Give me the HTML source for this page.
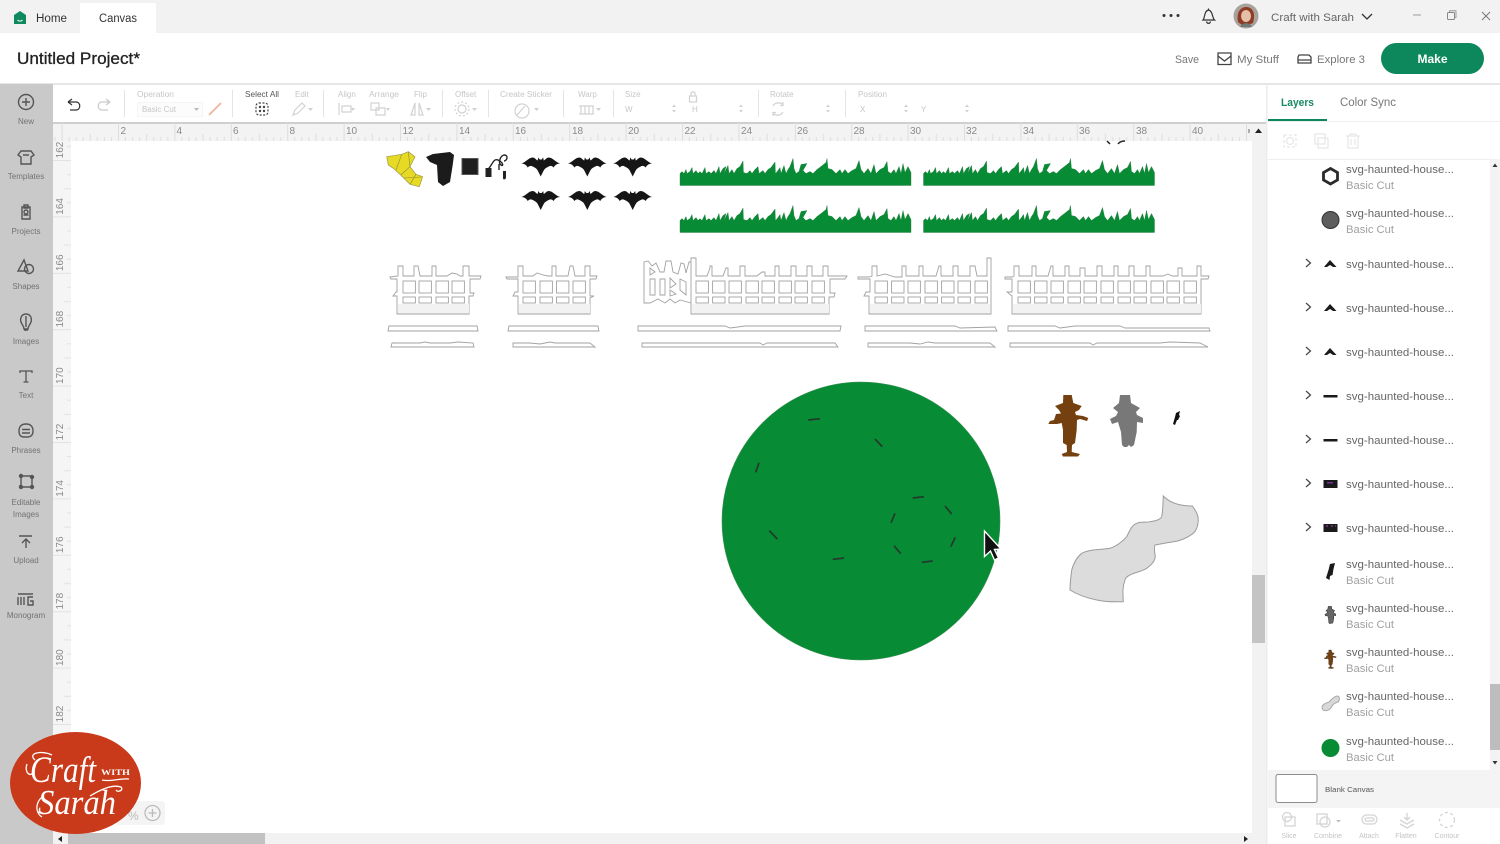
<!DOCTYPE html>
<html lang="en"><head><meta charset="utf-8"><title>Untitled Project</title>
<style>
html,body{margin:0;padding:0;width:1500px;height:844px;overflow:hidden;background:#fff}
svg{display:block;font-family:"Liberation Sans",sans-serif}
.d{fill:#c6c6c6;font-size:8px}
.s{fill:#727272;font-size:8px;text-anchor:middle}
.i{fill:none;stroke:#555;stroke-width:1.4}
.f{fill:#fff;stroke:#a2a2a2;stroke-width:.9}
.c{stroke:#d2d2d2;stroke-width:1.2;fill:none}
.r{fill:#8a8a8a;font-size:10px}
.n{fill:#666;font-size:11px}
.b{fill:#a0a0a0;font-size:11px}
.u{fill:#c4c4c4;font-size:7px;text-anchor:middle}
</style></head><body>
<svg width="1500" height="844" viewBox="0 0 1500 844" xmlns="http://www.w3.org/2000/svg">
<defs>
<pattern id="hr" x="118" y="123" width="56.4" height="18" patternUnits="userSpaceOnUse">
<path d="M.5 0V18M7.5 14V18M14.6 14V18M21.6 14V18M28.7 11V18M35.7 14V18M42.8 14V18M49.8 14V18" stroke="#dedede" stroke-width="1" fill="none"/></pattern>
<pattern id="vr" x="53" y="160" width="18" height="56.4" patternUnits="userSpaceOnUse">
<path d="M0 .5H18M14 14.6H18M11 28.7H18M14 42.8H18" stroke="#e2e2e2" stroke-width="1" fill="none"/></pattern>
<path id="gr" fill="#078b34" stroke="#2d7f45" stroke-width=".4" d="M0 27V15L2 13L4 15L6 11L7 15L10 13L12 9L13 15L16 12L18 15L20 13L22 15L25 9L26 15L29 13L31 15L34 12L36 15L39 8L40 15L43 10L46 8L44 15L48 7L49 15L52 11L54 15L57 10L60 8L63 2.5L63.5 14L67 15L70 12L72 15L75 11L78 8L79 15L83 12L85 15L88 11L91 9L95 3.5L95.500 15L98 12L100 9L101 15L104 7L106 15L108 11L110 8L113 0L114 10L116 15L119 13L121 6L127 5L123 12L126 15L130 13L133 15L137 11L141 8L146 4L147 0L148 10L152 11L156 15L160 11L162 15L165 11L168 15L172 12L176 10L179 2L181 11L184 15L188 10L191 15L194 6L196 15L200 11L204 9L207 3L208 13L211 15L214 11L216 15L219 8L221 15L223 5L225 14L228 8L231 14V27Z"/>
<path id="bat" fill="#161616" d="M-19.5 7C-15 6-12 1-8 1C-6 1-5 3-3 4L-2.5 1L-1 3H1L2.5 1L3 4C5 3 6 1 8 1C12 1 15 6 19.5 7C16 7 14 9 13 11C11 9 10 9 8 10C6 11 4 12 3 14L0 20L-3 14C-4 12-6 11-8 10C-10 9-11 9-13 11C-14 9-16 7-19.5 7Z"/>
<g id="w" class="f"><rect width="12.4" height="12"/><rect y="16" width="12.4" height="6"/></g>
<path id="sc" d="M1063.300 395H1071.700L1073.300 403L1081.700 406L1079 410L1075 412L1076 415L1083 416L1088.300 418L1087 421L1080 419L1077 420L1076.700 430L1075 443L1072 445L1071.700 452L1080 454L1078 456.500H1063L1061.700 454L1067 452L1066.700 445L1063 443L1063 430L1061.700 423L1057 424L1048.300 424L1050 421L1054 420L1056 414L1061 413.500L1059 410L1055 406L1063 403Z"/>
<path id="sg" d="M1120 395H1130L1131 403L1140 408L1136 412L1137 415L1143 418L1143 423L1137 422L1136.700 432L1134 445L1131 447L1129 445L1127 447L1124 447L1122 445L1121 432L1118 422L1112 424L1110 419L1116 416L1118 412L1113 408L1119 403Z"/>
<path id="cl" fill="#dcdcdc" stroke="#9c9c9c" stroke-width="1" d="M1163.300 496C1170 503 1180 506 1192.300 506C1196 511 1198.300 515 1198.300 520C1198 527 1196 531 1193.300 533.300C1187 538 1180 541 1173.300 541.700C1166 543 1160 544 1155 545C1153 550 1156 554 1155 558.300C1154 563 1150 566 1146.700 568.300C1141 572 1135 572 1130 575C1126 577 1125 579 1125 580C1122 588 1123 595 1123.300 601.700C1114 602 1105 602 1096.700 600C1087 598 1078 595 1070 590C1070 583 1071 576 1071.700 570C1074 562 1077 557 1081.700 553.300C1090 549 1100 550 1110 548.300C1117 546 1122 542 1126.700 536.700C1130 530 1132 525 1136.700 523.300C1142 521 1146 523 1150 521.700C1155 521 1160 520 1161.700 516.700C1163 510 1163 503 1163.300 496Z"/>
<path id="bd" fill="#111" d="M1175 425L1173 424L1175 417L1176 413L1180 411L1179 415L1180 416L1178 420L1177 420Z"/>
</defs>

<rect width="1500" height="844" fill="#fff"/>
<rect width="1500" height="33" fill="#f2f2f2"/>
<rect x="80" y="3" width="76" height="30" fill="#fff"/>
<path d="M14 15L20 11L26 15V24H14Z" fill="#0f8a5f"/><path d="M17.500 20C19 21.500 21 21.500 22.500 20" stroke="#fff" stroke-width="1" fill="none"/>
<text x="36" y="22" font-size="11.500" fill="#333" textLength="31" lengthAdjust="spacingAndGlyphs">Home</text>
<text x="99" y="22" font-size="11.500" fill="#333" textLength="38" lengthAdjust="spacingAndGlyphs">Canvas</text>
<circle cx="1164" cy="15.500" r="1.500" fill="#333"/><circle cx="1171" cy="15.500" r="1.500" fill="#333"/><circle cx="1178" cy="15.500" r="1.500" fill="#333"/>
<path d="M1203 20C1205 18 1204 11 1208.500 10C1213 11 1212 18 1214.500 20ZM1206.500 21.500C1207 24 1210 24 1210.500 21.500M1208.500 8.500V10" fill="none" stroke="#333" stroke-width="1.200"/>
<circle cx="1246" cy="16" r="12.500" fill="#a9a29c"/><path d="M1238 22C1236 12 1241 7 1246 7C1252 7 1256 12 1253 23L1248 25H1242Z" fill="#8e3c24"/><ellipse cx="1246" cy="16" rx="5" ry="6" fill="#e5bfa8"/><path d="M1240 27C1242 22 1250 22 1252 27Z" fill="#6d7a78"/>
<text x="1271" y="21" font-size="11" fill="#666" textLength="83" lengthAdjust="spacingAndGlyphs">Craft with Sarah</text>
<path d="M1362 14L1367 19L1372 14" fill="none" stroke="#333" stroke-width="1.300"/>
<path d="M1413 15H1421" stroke="#999" stroke-width="1"/>
<rect x="1447.500" y="12.500" width="7" height="7" rx="1" fill="none" stroke="#888"/><path d="M1449.500 12V10.800H1456V17.500H1455" fill="none" stroke="#888" stroke-width=".8"/>
<path d="M1482 12L1490 20M1490 12L1482 20" stroke="#777" stroke-width="1"/>

<text x="17" y="64" font-size="16.500" fill="#222" textLength="123" lengthAdjust="spacingAndGlyphs" stroke="#222" stroke-width=".3">Untitled Project*</text>
<text x="1175" y="63" font-size="11" fill="#777" textLength="24" lengthAdjust="spacingAndGlyphs">Save</text>
<path d="M1218 53H1231V64.500H1218ZM1218 56L1224.500 61L1231 56" fill="none" stroke="#444" stroke-width="1.300"/>
<text x="1237" y="63" font-size="11" fill="#777" textLength="42" lengthAdjust="spacingAndGlyphs">My Stuff</text>
<path d="M1299 55H1309L1311 57V63H1298V57ZM1298 60H1311" fill="none" stroke="#444" stroke-width="1.300"/>
<text x="1317" y="63" font-size="11" fill="#777" textLength="48" lengthAdjust="spacingAndGlyphs">Explore 3</text>
<rect x="1381" y="43" width="103" height="31" rx="15.500" fill="#0d875c"/>
<text x="1432.500" y="63" font-size="12" font-weight="bold" fill="#fff" text-anchor="middle">Make</text>
<rect y="83" width="1500" height="2" fill="#e6e6e6"/>

<rect y="84" width="53" height="760" fill="#c9c9c9"/>
<g class="i">
<circle cx="26" cy="102" r="7.500"/><path d="M26 98V106M22 102H30"/>
<path d="M21 151H31L34 155L31 157V164H21V157L18 155ZM23 155H29"/>
<path d="M22 207H30V219H22ZM24 205H28V208H24ZM23.500 215H28.500"/><circle cx="26" cy="212" r="2"/>
<path d="M24 260L18 271H28Z"/><circle cx="29" cy="269" r="4.500"/>
<path d="M26 314C21 314 20 319 21 322C22 325 24 326 24 329H28C28 326 30 325 31 322C32 319 31 314 26 314ZM24 330H28M26 316V327"/>
<path d="M20 373V371H32V373M26 371V382M23.500 382H28.500" stroke-width="1.300"/>
<path d="M26 424C31 424 33 427 33 431C33 435 31 437 27 437H24C20 437 19 434 19 431C19 427 21 424 26 424ZM22 429.500H30M22 433H30"/>
<path d="M21 476V487H32V477M21 476H32M19 486H22"/><circle cx="21" cy="476" r="1.500" fill="#555"/><circle cx="32" cy="477" r="1.500" fill="#555"/><circle cx="21" cy="487" r="1.500" fill="#555"/><circle cx="32" cy="487" r="1.500" fill="#555"/>
<path d="M19 536H32M26 548V539M22 543L26 539L30 543"/>
<path d="M18 594H33M18 597V605M21 597V605M24 597V605M33 597H28V605H33V601H30"/>
</g>
<g class="s">
<text x="26" y="124">New</text><text x="26" y="179">Templates</text><text x="26" y="234">Projects</text><text x="26" y="289">Shapes</text><text x="26" y="344">Images</text><text x="26" y="398">Text</text><text x="26" y="453">Phrases</text><text x="26" y="505">Editable</text><text x="26" y="517">Images</text><text x="26" y="563">Upload</text><text x="26" y="618">Monogram</text>
</g>

<rect x="53" y="85" width="1213" height="37" fill="#fff"/>
<path d="M68 102L72 99M68 102L72 105M68 102H76C81 102 81 110 76 110H70" fill="none" stroke="#333" stroke-width="1.200"/>
<path d="M110 102L106 99M110 102L106 105M110 102H102C97 102 97 110 102 110H108" fill="none" stroke="#c9c9c9" stroke-width="1.200"/>
<g stroke="#e4e4e4" stroke-width="1"><path d="M124.500 90V117M232.500 90V117M323.500 90V117M442.500 90V117M488.500 90V117M563.500 90V117M613.500 90V117M758.500 90V117M845.500 90V117"/></g>
<rect x="137.500" y="102.500" width="65" height="14" fill="#fcfcfc" stroke="#f5f5f5"/>
<g class="d">
<text x="137" y="97" textLength="37" lengthAdjust="spacingAndGlyphs">Operation</text>
<text x="142" y="112" textLength="34" lengthAdjust="spacingAndGlyphs">Basic Cut</text>
<text x="295" y="97">Edit</text><text x="338" y="97">Align</text><text x="369" y="97" textLength="30" lengthAdjust="spacingAndGlyphs">Arrange</text><text x="414" y="97">Flip</text><text x="455" y="97">Offset</text>
<text x="500" y="97" textLength="52" lengthAdjust="spacingAndGlyphs">Create Sticker</text><text x="578" y="97">Warp</text><text x="625" y="97">Size</text><text x="625" y="112">W</text><text x="692" y="112">H</text><text x="770" y="97">Rotate</text><text x="858" y="97" textLength="29" lengthAdjust="spacingAndGlyphs">Position</text><text x="860" y="112">X</text><text x="921" y="112">Y</text>
</g>
<text x="245" y="97" font-size="8" fill="#555" textLength="34" lengthAdjust="spacingAndGlyphs">Select All</text>
<path d="M194 108H199L196.500 111Z" fill="#bbb"/>
<path d="M209 115L221 103" stroke="#eeb39b" stroke-width="1.700"/>
<rect x="256" y="103" width="12" height="12" rx="3" fill="none" stroke="#444" stroke-width="1.200" stroke-dasharray="2 1.500"/>
<circle cx="260" cy="107" r="1.200" fill="#444"/><circle cx="264" cy="107" r="1.200" fill="#444"/><circle cx="260" cy="111" r="1.200" fill="#444"/><circle cx="264" cy="111" r="1.200" fill="#444"/>
<g class="c">
<path d="M293 115L295 110L302 103L305 106L298 113Z"/><path d="M339 103V115M342 106H351V112H342ZM371 103H379V110H371ZM376 108H385V115H376ZM411 115L415 103V115ZM423 115L419 103V115Z"/>
<circle cx="462" cy="109" r="4"/><circle cx="462" cy="109" r="7" stroke-dasharray="2 2"/>
<circle cx="522" cy="111" r="7"/><path d="M517 115L525 106"/>
<path d="M579 106H594M579 114H594M581 106V114M585 106V114M589 106V114M593 106V114"/>
<rect x="689.500" y="96" width="7" height="6"/><path d="M691 96V93.500C691 91.500 695 91.500 695 93.500V96"/>
<path d="M773 106C775 102 781 102 783 105M783 112C781 116 775 116 773 113M783 102V105.500H780M773 116V112.500H776"/>
</g>
<g fill="#d0d0d0"><path d="M308 108H313L310.500 111ZM351 108H355L353 111ZM386 108H390L388 111ZM426 108H431L428.500 111ZM472 108H477L474.500 111ZM534 108H539L536.500 111ZM596 108H601L598.500 111Z"/>
<path d="M672 107L674 104.500L676 107ZM672 110L674 112.500L676 110ZM739 107L741 104.500L743 107ZM739 110L741 112.500L743 110ZM826 107L828 104.500L830 107ZM826 110L828 112.500L830 110ZM904 107L906 104.500L908 107ZM904 110L906 112.500L908 110ZM965 107L967 104.500L969 107ZM965 110L967 112.500L969 110Z"/></g>

<rect x="53" y="122" width="1213" height="2" fill="#cfcfcf"/>
<rect x="53" y="124" width="1199" height="17" fill="#f3f3f3"/>
<rect x="53" y="123" width="1199" height="18" fill="url(#hr)"/>
<rect x="53" y="141" width="18" height="692" fill="#f5f5f5"/>
<rect x="53" y="141" width="18" height="692" fill="url(#vr)"/>
<g class="r">
<text x="120.500" y="134">2</text><text x="176.500" y="134">4</text><text x="233" y="134">6</text><text x="289.500" y="134">8</text><text x="346" y="134">10</text><text x="402.500" y="134">12</text><text x="459" y="134">14</text><text x="515" y="134">16</text><text x="572" y="134">18</text><text x="628" y="134">20</text><text x="684.500" y="134">22</text><text x="741" y="134">24</text><text x="797" y="134">26</text><text x="853.500" y="134">28</text><text x="910" y="134">30</text><text x="966" y="134">32</text><text x="1023" y="134">34</text><text x="1079" y="134">36</text><text x="1136" y="134">38</text><text x="1192" y="134">40</text>
</g>
<g class="r" text-anchor="middle">
<text transform="translate(63,150) rotate(-90)">162</text><text transform="translate(63,206.400) rotate(-90)">164</text><text transform="translate(63,262.800) rotate(-90)">166</text><text transform="translate(63,319.200) rotate(-90)">168</text><text transform="translate(63,375.600) rotate(-90)">170</text><text transform="translate(63,432) rotate(-90)">172</text><text transform="translate(63,488.400) rotate(-90)">174</text><text transform="translate(63,544.800) rotate(-90)">176</text><text transform="translate(63,601.200) rotate(-90)">178</text><text transform="translate(63,657.600) rotate(-90)">180</text><text transform="translate(63,714) rotate(-90)">182</text>
</g>
<rect x="71" y="141" width="1181" height="692" fill="#fff"/>
<rect x="1252" y="124" width="14" height="709" fill="#f2f2f2"/>
<path d="M1255 133L1258.500 128.500L1262 133Z" fill="#222"/><path d="M1249 129V133" stroke="#666"/>
<rect x="1252" y="575" width="13" height="68" fill="#c4c4c4"/>
<rect x="53" y="833" width="1213" height="11" fill="#f2f2f2"/>
<rect x="68" y="833" width="197" height="11" fill="#c2c2c2"/>
<path d="M62 836V842L58 839Z" fill="#222"/><path d="M1244 836V842L1248 839Z" fill="#222"/>

<path d="M1107 141L1110 144M1118 144C1120 141 1123 141 1125 141" stroke="#222" stroke-width="1.500" fill="none"/>
<path d="M386.700 156.700L401.700 154.300L408.300 151.700L415 156.700L410 166.700L416 174.300L422.700 176.700L419.300 186.700L410 184.300L400.700 175L393.300 168.300L388.300 165Z" fill="#e6da24" stroke="#9a9a50" stroke-width=".7"/>
<path d="M401.700 154.300L396 170M408.300 151.700L410 166.700M410 166.700L400.700 175M404 178L421 177M410 184.300L416 174.300" fill="none" stroke="#8e8a3a" stroke-width=".6"/>
<path d="M426 157L433 154L450 152L454 155L452.700 165L450 182L443 186L438 182L437 165L430 162Z" fill="#1b1b1b"/>
<rect x="462" y="158.500" width="16" height="16" fill="#1e1e1e" stroke="#555"/>
<rect x="485.500" y="168" width="6" height="9" fill="#222"/>
<path d="M488 169C492 166 493 158 498 160C503 162 504 167 501 165C498 163 500 156 504 155C509 155 507 161 504 161M499 164V170" fill="none" stroke="#222" stroke-width="1.400"/>
<path d="M503 171H506V178C505 180 503 180 503 178Z" fill="#222"/>
<use href="#bat" x="540.700" y="156.500"/><use href="#bat" x="587.300" y="156.500"/><use href="#bat" x="632.700" y="156.500"/>
<use href="#bat" x="540.700" y="190"/><use href="#bat" x="587.300" y="190"/><use href="#bat" x="632.700" y="190"/>
<use href="#gr" x="680" y="158.500"/><use href="#gr" x="923.500" y="158.500"/><use href="#gr" x="680" y="205.500"/><use href="#gr" x="923.500" y="205.500"/>

<path class="f" d="M390 277L398 276V266H403V276H414V266H418L420 276H432V266H436V276H447L452 273L457 274L460 276H463V266H469V276H481L480 279H470V293H474L473 296H469V314H397V296L393 296L396 292H397V279H391Z"/>
<rect x="398" y="304" width="71" height="9.500" fill="#f2f2f2"/>
<use href="#w" x="403" y="281"/><use href="#w" x="419" y="281"/><use href="#w" x="436" y="281"/><use href="#w" x="452" y="281"/>
<path class="f" d="M506 277H518V266H523V276H533L537 273L543 275L548 276H552V266H556V276H568L570 266H573L575 276H585V266H590V276H597L596 279H590V296H594L590 298V314H518V296L513 296L515 292H518V279H507Z"/>
<rect x="519" y="304" width="71" height="9.500" fill="#f2f2f2"/>
<use href="#w" x="523" y="281"/><use href="#w" x="540" y="281"/><use href="#w" x="556.500" y="281"/><use href="#w" x="573" y="281"/>
<path class="f" d="M691 303L680 300L675 303L670 299L665 303L658 299L650 303H644V262L648 261L652 266L656 263L660 272L664 272L666 261L671 261L673 272L678 274L681 263L684 264L686 273L689 262L692 262V303Z"/>
<path class="f" d="M650 279H655V295H650ZM660 279H665V295H660ZM670 278L676 284L670 288ZM670 290L676 294L670 296ZM680 279L686 282V295L680 290ZM650 268L655 272L650 275Z"/>
<path class="f" d="M691 314V258H696V276H707L710 268V266H712V276H723L726 268L728 268V276H740V266H745V276H757L762 272H765V276H775V266H779V276H791V266H796V276H807V266H812V276H823V266H828V276H847L845 279H830V293H835L834 297H829V314Z"/>
<rect x="692" y="304" width="137" height="9.500" fill="#f2f2f2"/>
<use href="#w" x="696" y="281"/><use href="#w" x="712.600" y="281"/><use href="#w" x="729" y="281"/><use href="#w" x="746" y="281"/><use href="#w" x="762" y="281"/><use href="#w" x="779" y="281"/><use href="#w" x="795" y="281"/><use href="#w" x="812" y="281"/>
<path class="f" d="M858 277H869L872 276V266H877V276L885 274L895 277H902V266H906V276H919V266H923V276H936L939 266H941V276H953V266H958V276H970V266H975L977 276H987V258H991V314H869V296L864 296L866 292H870V279H858Z"/>
<rect x="870" y="304" width="120" height="9.500" fill="#f2f2f2"/>
<use href="#w" x="875" y="281"/><use href="#w" x="891.600" y="281"/><use href="#w" x="908" y="281"/><use href="#w" x="925" y="281"/><use href="#w" x="941.600" y="281"/><use href="#w" x="958" y="281"/><use href="#w" x="975" y="281"/>
<path class="f" d="M1005 277H1012L1014 276V266H1019V276H1032V266H1036V276H1048L1051 266H1053V276H1065V266H1069V276H1080V268H1085V276H1097V266H1102V276H1114V266H1118V276H1129V266H1134V276H1146V266H1150V276H1163L1168 274L1172 276H1178V268H1182V276H1197V266H1201V276H1209L1208 279H1201V314H1012V296L1007 292H1012V279H1005Z"/>
<rect x="1013" y="304" width="188" height="9.500" fill="#f2f2f2"/>
<use href="#w" x="1018" y="281"/><use href="#w" x="1034.600" y="281"/><use href="#w" x="1051" y="281"/><use href="#w" x="1068" y="281"/><use href="#w" x="1084" y="281"/><use href="#w" x="1101" y="281"/><use href="#w" x="1118" y="281"/><use href="#w" x="1134" y="281"/><use href="#w" x="1151" y="281"/><use href="#w" x="1167" y="281"/><use href="#w" x="1184" y="281"/>
<g class="f">
<path d="M389 326H477L478 331H388Z"/><path d="M392 343H420L425 342L430 343H450L458 342L473 343L474 347H391Z"/>
<path d="M509 326H598L599 331H508Z"/><path d="M513 343H530L540 344L550 342L555 343H590L595 347H513Z"/>
<path d="M638 326H725L730 328L745 326H841L840 331H638Z"/><path d="M642 343H760L763 345L767 343H835L838 347H642Z"/>
<path d="M865 326H955L960 328L995 327L997 331H865Z"/><path d="M868 343H910L920 344L928 342L935 343H990L995 347H868Z"/>
<path d="M1008 326H1055L1060 328L1075 326H1120L1125 328H1209L1210 331H1008Z"/><path d="M1010 343H1090L1093 345L1097 343H1160L1170 342L1200 343L1208 347H1010Z"/>
</g>
<circle cx="861" cy="521" r="139" fill="#078b34" stroke="#3b8f56" stroke-width=".6"/>
<g stroke="#23392c" stroke-width="1.700" fill="none">
<path d="M808.300 420L820 418.700M875 439L882.300 446.700M759 462.700L755.700 472.300M912.700 498L924 496.700M945 506L951.700 514M895 513.300L891 522.700M769.300 530.700L777.300 539M955.300 537.300L950.700 546.700M894 545.700L900.700 553.700M832.700 559.300L844 558M921.700 562.300L932.700 561"/>
</g>
<path d="M984.500 531V556.500L990.500 551L994.500 560L998.500 558L994.500 549.500L1001 549Z" fill="#111" stroke="#fff" stroke-width="1.400"/>
<use href="#sc" fill="#74400f"/>
<use href="#sg" fill="#787878"/>
<use href="#bd"/>
<use href="#cl"/>

<rect x="1266" y="85" width="234" height="759" fill="#fff"/>
<rect x="1266" y="85" width="1.500" height="759" fill="#ececec"/>
<text x="1281" y="106" font-size="11" font-weight="bold" fill="#1a8a63" textLength="33" lengthAdjust="spacingAndGlyphs">Layers</text>
<text x="1340" y="106" font-size="11.500" fill="#777" textLength="56" lengthAdjust="spacingAndGlyphs">Color Sync</text>
<rect x="1268" y="119" width="59" height="2" fill="#0d875c"/>
<rect x="1268" y="121" width="232" height="1" fill="#eee"/>
<g fill="none" stroke="#e8e8e8" stroke-width="1.300">
<rect x="1284" y="135" width="12" height="12" stroke-dasharray="3 2"/><circle cx="1290" cy="141" r="3.500"/>
<rect x="1315" y="134" width="10" height="10"/><rect x="1318" y="138" width="10" height="10"/>
<path d="M1346 136H1360M1350 136V134H1356V136M1348 136V148H1358V136M1351 139V145M1355 139V145"/>
</g>
<rect x="1268" y="159" width="222" height="1" fill="#eee"/>
<rect x="1490" y="159" width="10" height="611" fill="#f3f3f3"/>
<rect x="1490" y="684" width="10" height="66" fill="#bdbdbd"/>
<path d="M1492.500 167L1495 163.500L1497.500 167Z" fill="#333"/><path d="M1492.500 761L1495 764.500L1497.500 761Z" fill="#333"/>
<g class="n">
<text x="1346" y="173" textLength="108" lengthAdjust="spacingAndGlyphs">svg-haunted-house...</text>
<text x="1346" y="217" textLength="108" lengthAdjust="spacingAndGlyphs">svg-haunted-house...</text>
<text x="1346" y="268" textLength="108" lengthAdjust="spacingAndGlyphs">svg-haunted-house...</text>
<text x="1346" y="312" textLength="108" lengthAdjust="spacingAndGlyphs">svg-haunted-house...</text>
<text x="1346" y="356" textLength="108" lengthAdjust="spacingAndGlyphs">svg-haunted-house...</text>
<text x="1346" y="400" textLength="108" lengthAdjust="spacingAndGlyphs">svg-haunted-house...</text>
<text x="1346" y="444" textLength="108" lengthAdjust="spacingAndGlyphs">svg-haunted-house...</text>
<text x="1346" y="488" textLength="108" lengthAdjust="spacingAndGlyphs">svg-haunted-house...</text>
<text x="1346" y="532" textLength="108" lengthAdjust="spacingAndGlyphs">svg-haunted-house...</text>
<text x="1346" y="568" textLength="108" lengthAdjust="spacingAndGlyphs">svg-haunted-house...</text>
<text x="1346" y="612" textLength="108" lengthAdjust="spacingAndGlyphs">svg-haunted-house...</text>
<text x="1346" y="656" textLength="108" lengthAdjust="spacingAndGlyphs">svg-haunted-house...</text>
<text x="1346" y="700" textLength="108" lengthAdjust="spacingAndGlyphs">svg-haunted-house...</text>
<text x="1346" y="745" textLength="108" lengthAdjust="spacingAndGlyphs">svg-haunted-house...</text>
</g>
<g class="b">
<text x="1346" y="189" textLength="48" lengthAdjust="spacingAndGlyphs">Basic Cut</text>
<text x="1346" y="233" textLength="48" lengthAdjust="spacingAndGlyphs">Basic Cut</text>
<text x="1346" y="584" textLength="48" lengthAdjust="spacingAndGlyphs">Basic Cut</text>
<text x="1346" y="628" textLength="48" lengthAdjust="spacingAndGlyphs">Basic Cut</text>
<text x="1346" y="672" textLength="48" lengthAdjust="spacingAndGlyphs">Basic Cut</text>
<text x="1346" y="716" textLength="48" lengthAdjust="spacingAndGlyphs">Basic Cut</text>
<text x="1346" y="761" textLength="48" lengthAdjust="spacingAndGlyphs">Basic Cut</text>
</g>
<path d="M1330.500 168.500L1337.500 172.500V180L1330.500 184L1323.500 180V172.500Z" fill="#fff" stroke="#2b2b2b" stroke-width="2.800"/>
<circle cx="1330.500" cy="220" r="8.500" fill="#5e5e5e" stroke="#333" stroke-width="1"/>
<g fill="none" stroke="#444" stroke-width="1.200">
<path d="M1306 259L1310.500 263L1306 267M1306 303L1310.500 307L1306 311M1306 347L1310.500 351L1306 355M1306 391L1310.500 395L1306 399M1306 435L1310.500 439L1306 443M1306 479L1310.500 483L1306 487M1306 523L1310.500 527L1306 531"/>
</g>
<g fill="#1a1a1a">
<path d="M1324 267L1330 260L1336.500 267L1333 267L1330 265L1327 267Z"/>
<path d="M1324 311L1330 304L1336.500 311L1333 311L1330 309L1327 311Z"/>
<path d="M1324 355L1330 348L1336.500 355L1333 355L1330 353L1327 355Z"/>
<rect x="1323.500" y="395" width="14" height="2.500"/>
<rect x="1323.500" y="439" width="14" height="2.500"/>
<rect x="1323.500" y="480" width="14" height="8"/>
<rect x="1323.500" y="524" width="14" height="8"/>
<path d="M1326 578L1328.500 570L1330 564L1335 563L1333.500 569L1332.500 575L1330 576L1329.500 580Z"/>
</g>
<rect x="1327" y="482" width="6" height="1.500" fill="#7a2f9a"/>
<path d="M1326 526H1328M1331 526H1333M1335 526H1336" stroke="#b04ac0" stroke-width="1"/>
<g transform="translate(1330.500,615) scale(.33) translate(-1127,-421)"><use href="#sg" fill="#666" stroke="#222" stroke-width="1.500"/></g>
<g transform="translate(1330.500,659) scale(.3) translate(-1069,-425)"><use href="#sc" fill="#74400f" stroke="#222" stroke-width="1"/></g>
<path d="M1322 708C1322 704 1326 703 1329 702C1331 700 1333 697 1337 696C1340 696 1340 700 1338 702C1334 703 1332 705 1331 708C1328 711 1323 712 1322 708Z" fill="#d8d8d8" stroke="#aaa"/>
<circle cx="1330.500" cy="748" r="9" fill="#078b34"/>
<rect x="1268" y="770" width="232" height="38" fill="#f4f4f4"/>
<rect x="1276" y="774.500" width="41" height="28" rx="2" fill="#fff" stroke="#8d8d8d"/>
<text x="1325" y="792" font-size="7.500" fill="#555" textLength="49" lengthAdjust="spacingAndGlyphs">Blank Canvas</text>
<g fill="none" stroke="#d4d4d4" stroke-width="1.300">
<circle cx="1287" cy="817" r="4.500"/><rect x="1285" y="817" width="10" height="9"/>
<rect x="1317" y="814" width="10" height="10"/><circle cx="1325" cy="822" r="5"/>
<rect x="1362" y="815" width="15" height="9" rx="4.500"/><rect x="1365" y="818" width="9" height="3" rx="1.500"/>
<path d="M1400 820L1407 824L1414 820M1400 824L1407 828L1414 824M1407 813V820M1404 817L1407 820L1410 817"/>
<circle cx="1447" cy="820" r="7.500" stroke-dasharray="3 2.500"/>
</g>
<path d="M1336 820H1341L1338.500 822.500Z" fill="#bbb"/>
<g class="u"><text x="1289" y="838">Slice</text><text x="1328" y="838">Combine</text><text x="1369" y="838">Attach</text><text x="1406" y="838">Flatten</text><text x="1447" y="838">Contour</text></g>

<rect x="115" y="801" width="50" height="24" rx="4" fill="#f4f4f4"/>
<text x="128" y="820" font-size="12" fill="#bbb">%</text>
<circle cx="152.500" cy="813" r="7.500" fill="none" stroke="#bbb" stroke-width="1.300"/><path d="M148.500 813H156.500M152.500 809V817" stroke="#bbb" stroke-width="1.300"/>
<ellipse cx="75.500" cy="783" rx="65.500" ry="51" fill="#c93a1a"/>
<g fill="#fff" font-family="'Liberation Serif',serif">
<text x="30" y="782" font-size="37" font-style="italic" textLength="66" lengthAdjust="spacingAndGlyphs">Craft</text>
<text x="101" y="775" font-size="8.500" font-weight="bold" textLength="29" lengthAdjust="spacingAndGlyphs">WITH</text>
<text x="38" y="814" font-size="35" font-style="italic" textLength="78" lengthAdjust="spacingAndGlyphs">Sarah</text>
</g>
<path d="M102 780C110 782 120 778 129 779M90 796C100 790 112 784 121 787C124 790 118 793 116 790M35 760C27 753 42 750 52 755M27 764C24 772 30 778 34 772M44 796C36 800 34 812 42 817" fill="none" stroke="#fff" stroke-width="1.300"/>
</svg>
</body></html>
